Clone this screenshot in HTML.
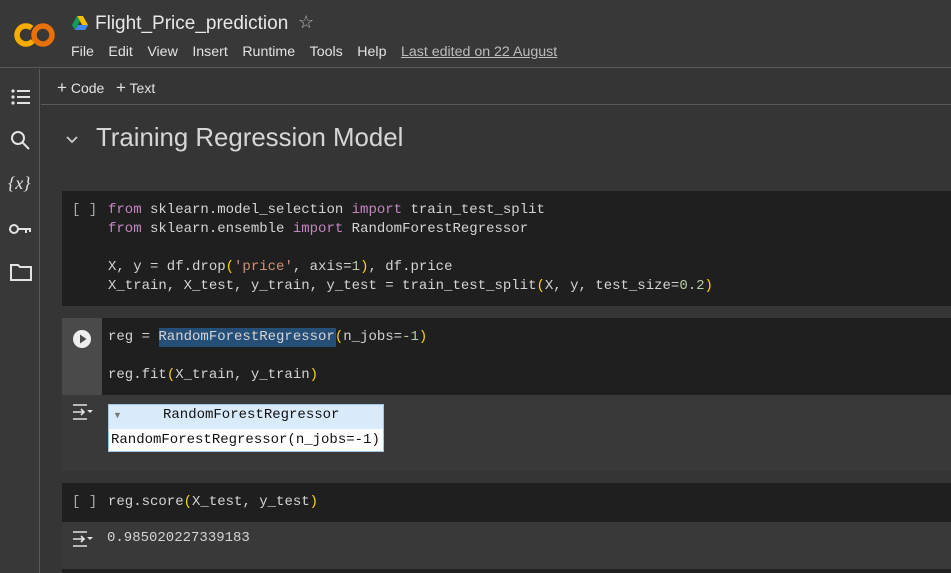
<!DOCTYPE html>
<html><head><meta charset="utf-8"><style>
*{margin:0;padding:0;box-sizing:border-box}
body{width:951px;height:573px;overflow:hidden;background:#353535;font-family:"Liberation Sans",sans-serif;color:#e3e3e3;position:relative}
.a{position:absolute}
.mono{font-family:"Liberation Mono",monospace;font-size:14px;line-height:19px;color:#d4d4d4;white-space:pre}
.k{color:#c586c0}.s{color:#ce9178}.n{color:#b5cea8}.p{color:#ffd700}
.menu span{margin-right:14.5px}
</style></head><body>
<div class="a" style="left:0;top:0;width:951px;height:68px;background:#383838;border-bottom:1px solid #5a5a5a"></div>
<svg class="a" style="left:14px;top:21px" width="42" height="28" viewBox="0 0 42 28">
<circle cx="12" cy="14" r="9" fill="none" stroke="#f9ab00" stroke-width="5.5" stroke-dasharray="42 15" transform="rotate(40 12 14)"/>
<circle cx="29" cy="14" r="9" fill="none" stroke="#e8710a" stroke-width="5.5"/>
</svg>
<svg class="a" style="left:72px;top:16px" width="16" height="14" viewBox="0 0 16 14">
<polygon points="5,0 11,0 16,9 13,14" fill="#fbbc04"/><polygon points="5,0 8,5 3,14 0,9" fill="#0f9d58"/><polygon points="3,14 13,14 16,9 6,9" fill="#4285f4"/></svg>
<div class="a" style="left:95px;top:13px;font-size:19px;color:#e8e8e8">Flight_Price_prediction</div>
<div class="a" style="left:298px;top:12px;font-size:18px;color:#bbb">☆</div>
<div class="a menu" style="left:71px;top:44px;font-size:14.2px;color:#e3e3e3"><span>File</span><span>Edit</span><span>View</span><span>Insert</span><span>Runtime</span><span>Tools</span><span>Help</span><span style="text-decoration:underline;color:#bdbdbd">Last edited on 22 August</span></div>
<div class="a" style="left:0;top:69px;width:40px;height:504px;background:#383838;border-right:1px solid #5a5a5a"></div>
<svg class="a" style="left:10px;top:88px" width="22" height="18" viewBox="0 0 22 18" fill="#e3e3e3"><circle cx="3" cy="3" r="1.6"/><circle cx="3" cy="9" r="1.6"/><circle cx="3" cy="15" r="1.6"/><rect x="7" y="2" width="13" height="2"/><rect x="7" y="8" width="13" height="2"/><rect x="7" y="14" width="13" height="2"/></svg>
<svg class="a" style="left:10px;top:130px" width="22" height="22" viewBox="0 0 22 22" fill="none" stroke="#e3e3e3" stroke-width="2"><circle cx="8" cy="8" r="6"/><line x1="12.5" y1="12.5" x2="19" y2="19"/></svg>
<div class="a" style="left:8px;top:173px;font-family:'Liberation Serif',serif;font-size:18px;font-style:italic;color:#e3e3e3">{<i>x</i>}</div>
<svg class="a" style="left:9px;top:222px" width="24" height="14" viewBox="0 0 24 14" fill="none" stroke="#e3e3e3" stroke-width="2"><circle cx="5" cy="7" r="4"/><path d="M9 7h13M17 7v4M21 7v3"/></svg>
<svg class="a" style="left:10px;top:263px" width="22" height="18" viewBox="0 0 22 18" fill="none" stroke="#e3e3e3" stroke-width="2"><path d="M1 2h7l2 2h11v13H1z"/></svg>
<div class="a" style="left:41px;top:104px;width:910px;height:1px;background:#5a5a5a"></div>
<div class="a" style="left:57px;top:78px;font-size:14px;color:#e3e3e3"><span style="font-size:17px">+</span> Code &nbsp;&nbsp;<span style="font-size:17px">+</span> Text</div>
<svg class="a" style="left:65px;top:135px" width="14" height="10" viewBox="0 0 14 10"><path d="M2 2l5 5 5-5" fill="none" stroke="#ccc" stroke-width="1.8"/></svg>
<div class="a" style="left:96px;top:124px;font-size:25.8px;color:#d6d6d6">Training Regression Model</div>
<div class="a" style="left:62px;top:191px;width:889px;height:115px;background:#1f1f1f"></div>
<div class="a mono" style="left:72px;top:201px;color:#aaa">[ ]</div>
<div class="a mono" style="left:108px;top:201px"><span class="k">from</span> sklearn.model_selection <span class="k">import</span> train_test_split
<span class="k">from</span> sklearn.ensemble <span class="k">import</span> RandomForestRegressor

X, y = df.drop<span class="p">(</span><span class="s">'price'</span>, axis=<span class="n">1</span><span class="p">)</span>, df.price
X_train, X_test, y_train, y_test = train_test_split<span class="p">(</span>X, y, test_size=<span class="n">0.2</span><span class="p">)</span></div>
<div class="a" style="left:62px;top:318px;width:889px;height:77px;background:#1f1f1f"></div>
<div class="a" style="left:62px;top:318px;width:40px;height:77px;background:#4a4a4a"></div>
<div class="a" style="left:62px;top:395px;width:889px;height:76px;background:#393939"></div>
<svg class="a" style="left:72px;top:329px" width="20" height="20" viewBox="0 0 20 20"><circle cx="10" cy="10" r="9" fill="#eee"/><polygon points="8,5.5 14.5,10 8,14.5" fill="#4a4a4a"/></svg>
<div class="a" style="left:159px;top:328px;width:177px;height:19px;background:#264f78"></div>
<div class="a mono" style="left:108px;top:328px">reg = RandomForestRegressor<span class="p">(</span>n_jobs=<span class="n">-1</span><span class="p">)</span>

reg.fit<span class="p">(</span>X_train, y_train<span class="p">)</span></div>
<svg class="a" style="left:72px;top:404px" width="22" height="16" viewBox="0 0 22 16" fill="none" stroke="#e3e3e3" stroke-width="1.6"><path d="M1 1h14M1 15h14M1 8h11M9 5l3 3-3 3"/><polygon points="15,6 21,6 18,9" fill="#e3e3e3" stroke="none"/></svg>
<div class="a" style="left:108px;top:404px;width:276px;height:48px;background:#fff;border:1px solid #9ec7ea"></div>
<div class="a" style="left:109px;top:405px;width:274px;height:24px;background:#d9eafa"></div>
<div class="a" style="left:113px;top:410px;font-size:9px;color:#777">▼</div>
<div class="a mono" style="left:163px;top:406px;color:#111">RandomForestRegressor</div>
<div class="a mono" style="left:111px;top:431px;color:#111">RandomForestRegressor(n_jobs=-1)</div>
<div class="a" style="left:62px;top:483px;width:889px;height:39px;background:#1f1f1f"></div>
<div class="a" style="left:62px;top:522px;width:889px;height:47px;background:#393939"></div>
<div class="a mono" style="left:72px;top:493px;color:#aaa">[ ]</div>
<div class="a mono" style="left:108px;top:493px">reg.score<span class="p">(</span>X_test, y_test<span class="p">)</span></div>
<svg class="a" style="left:72px;top:531px" width="22" height="16" viewBox="0 0 22 16" fill="none" stroke="#e3e3e3" stroke-width="1.6"><path d="M1 1h14M1 15h14M1 8h11M9 5l3 3-3 3"/><polygon points="15,6 21,6 18,9" fill="#e3e3e3" stroke="none"/></svg>
<div class="a mono" style="left:107px;top:529px">0.985020227339183</div>
<div class="a" style="left:62px;top:569px;width:889px;height:4px;background:#1f1f1f"></div>
</body></html>
